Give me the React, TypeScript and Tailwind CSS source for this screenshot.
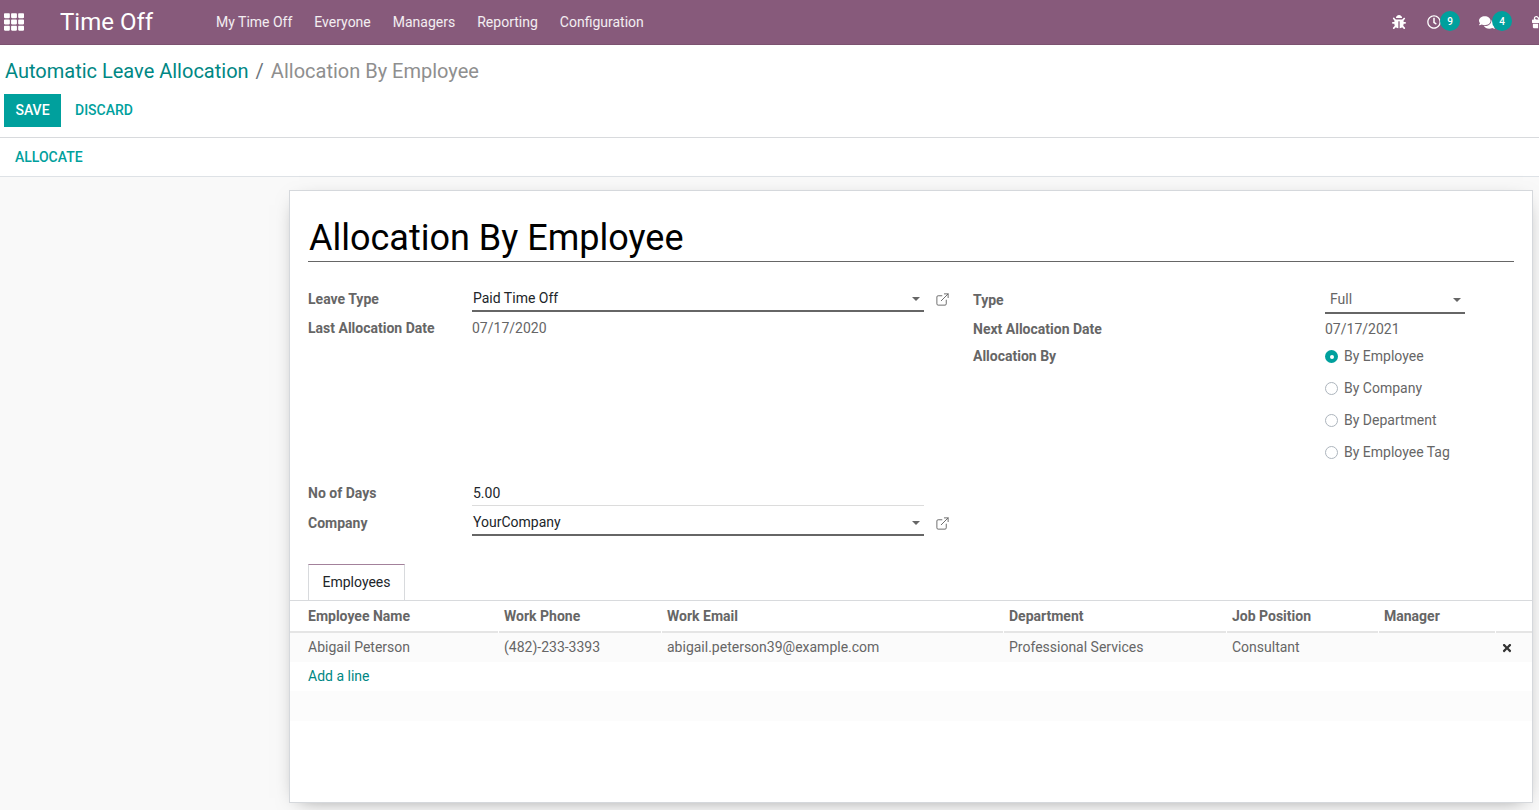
import { ChevronDown, ExternalLink } from "lucide-react";
import { FaBug, FaComments, FaGift, FaRegClock, FaTh, FaTimes } from "react-icons/fa";

const NAV_ITEMS = ["My Time Off", "Everyone", "Managers", "Reporting", "Configuration"];

const COLUMNS = [
  { label: "Employee Name", value: "Abigail Peterson", first: true },
  { label: "Work Phone", value: "(482)-233-3393" },
  { label: "Work Email", value: "abigail.peterson39@example.com" },
  { label: "Department", value: "Professional Services" },
  { label: "Job Position", value: "Consultant" },
  { label: "Manager", value: "" },
];

const RADIOS = ["By Employee", "By Company", "By Department", "By Employee Tag"];

function Caret() {
  return <span className="h-0 w-0 border-x-[4px] border-t-[4px] border-x-transparent border-t-[#666666]" />;
}

function Badge({ value }: { value: number }) {
  return (
    <span className="absolute left-[13px] top-[-4px] flex h-[20px] w-[20px] items-center justify-center rounded-full bg-[#00A09D] text-[10px] font-medium text-white">
      {value}
    </span>
  );
}

function Label({ text }: { text: string }) {
  return <span className="text-[14px] font-bold text-[#666666]">{text}</span>;
}

function SelectField({ value, width }: { value: string; width: string }) {
  return (
    <div className={`flex h-[25px] items-center justify-between border-b-2 border-[#666666] pl-px pr-1 ${width}`}>
      <span className="text-[14px] text-[#212529]">{value}</span>
      <Caret />
    </div>
  );
}

export default function App() {
  return (
    <div className="flex h-[810px] w-full flex-col overflow-hidden bg-[#f9f9f9] font-['Roboto',sans-serif] text-[14px] text-[#666666]">
      <header className="flex h-[45px] flex-none items-center border-b border-[#7c5270] bg-[#875A7B] text-white">
        <FaTh className="ml-[4px] h-[20px] w-[20px]" />
        <span className="ml-[36px] w-[156px] text-[24px]">Time Off</span>
        <nav className="flex gap-[22px]">
          {NAV_ITEMS.map((item) => (
            <span key={item} className="text-[14px] text-white/90">
              {item}
            </span>
          ))}
        </nav>
        <div className="ml-auto flex items-center">
          <FaBug className="h-[14px] w-[14px]" />
          <span className="relative ml-[21px] h-[14px] w-[14px]">
            <FaRegClock className="h-[14px] w-[14px]" />
            <Badge value={9} />
          </span>
          <span className="relative ml-[38px] h-[14px] w-[16px]">
            <FaComments className="h-[15px] w-[16px]" />
            <Badge value={4} />
          </span>
          <FaGift className="ml-[37px] mr-[-7px] h-[14px] w-[14px]" />
        </div>
      </header>

      <section className="flex-none border-b border-[#dee2e6] bg-white">
        <div className="flex h-[93px] flex-col border-b border-[#d8dadd] pl-[4px]">
          <div className="mt-[12px] flex h-[28px] items-center pl-px text-[20px]">
            <span className="text-[#008784]">Automatic Leave Allocation</span>
            <span className="mx-[7px] text-[#6c757d]">/</span>
            <span className="text-[#8f8f8f]">Allocation By Employee</span>
          </div>
          <div className="mt-[9px] flex items-center">
            <button className="h-[33px] w-[57px] bg-[#00A09D] text-[14px] font-medium text-white" type="button">
              SAVE
            </button>
            <button className="ml-[14px] text-[14px] font-medium text-[#00A09D]" type="button">
              DISCARD
            </button>
          </div>
        </div>
        <div className="flex h-[38px] items-center pl-[15px] text-[14px] font-medium text-[#00A09D]">ALLOCATE</div>
      </section>

      <main className="flex-1 pl-[289px] pr-[6px] pt-[13px]">
        <div className="h-[613px] border border-[#d5d8dc] bg-white shadow-[0_5px_20px_-10px_rgba(0,0,0,0.5)]">
          <div className="px-[18px]">
            <h1 className="mt-[24px] flex h-[46px] items-center border-b-0 pl-px text-[36px] font-normal leading-none text-black">
              Allocation By Employee
            </h1>
            <div className="h-[1px] w-[1206px] bg-[#666666]" />

            <div className="mt-[25px] flex">
              <div className="w-[665px]">
                <div className="flex items-center">
                  <div className="w-[164px]">
                    <Label text="Leave Type" />
                  </div>
                  <SelectField value="Paid Time Off" width="w-[452px]" />
                  <ExternalLink className="ml-[11px] h-[15px] w-[15px] stroke-[1.5] text-[#666666]" />
                </div>
                <div className="mt-[6px] flex items-center">
                  <div className="w-[164px]">
                    <Label text="Last Allocation Date" />
                  </div>
                  <span>07/17/2020</span>
                </div>
              </div>

              <div className="flex-1">
                <div className="flex items-center">
                  <div className="w-[352px]">
                    <Label text="Type" />
                  </div>
                  <div className="flex h-[27px] w-[140px] items-center justify-between border-b-2 border-[#666666] pl-[5px] pr-1">
                    <span>Full</span>
                    <Caret />
                  </div>
                </div>
                <div className="mt-[5px] flex items-center">
                  <div className="w-[352px]">
                    <Label text="Next Allocation Date" />
                  </div>
                  <span>07/17/2021</span>
                </div>
                <div className="mt-[6px] flex">
                  <div className="w-[352px]">
                    <Label text="Allocation By" />
                  </div>
                  <div className="flex flex-col gap-[11px]">
                    {RADIOS.map((radio, index) => (
                      <div key={radio} className="flex h-[21px] items-center">
                        {index === 0 ? (
                          <span className="flex h-[13px] w-[13px] items-center justify-center rounded-full bg-[#00A09D]">
                            <span className="h-[4px] w-[4px] rounded-full bg-white" />
                          </span>
                        ) : (
                          <span className="h-[13px] w-[13px] rounded-full border border-[#adb5bd]" />
                        )}
                        <span className="ml-[6px]">{radio}</span>
                      </div>
                    ))}
                  </div>
                </div>
              </div>
            </div>

            <div className="mt-[18px] flex items-center">
              <div className="w-[164px]">
                <Label text="No of Days" />
              </div>
              <div className="flex h-[25px] w-[452px] items-center border-b border-[#dcdcdc] pl-px text-[#212529]">5.00</div>
            </div>
            <div className="mt-[5px] flex items-center">
              <div className="w-[164px]">
                <Label text="Company" />
              </div>
              <SelectField value="YourCompany" width="w-[452px]" />
              <ExternalLink className="ml-[11px] h-[15px] w-[15px] stroke-[1.5] text-[#666666]" />
            </div>

            <div className="mt-[28px] flex h-[36px] w-[97px] items-center justify-center border-x border-t border-x-[#d8dadd] border-t-[#a3819b] bg-white text-[#212529]">
              Employees
            </div>
          </div>

          <div className="grid grid-cols-[209px_163px_342px_223px_152px_117px_36px] border-t border-[#d8dadd]">
            {COLUMNS.map((column) => (
              <div
                key={column.label}
                className={`mr-px flex h-[32px] items-center border-b-2 border-[#e5e5e5] font-bold ${column.first ? "pl-[18px]" : "pl-[5px]"}`}
              >
                {column.label}
              </div>
            ))}
            <div className="h-[32px] border-b-2 border-[#e5e5e5]" />
            {COLUMNS.map((column) => (
              <div
                key={column.label}
                className={`flex h-[29px] items-center bg-[#fbfbfb] ${column.first ? "pl-[18px]" : "pl-[5px]"}`}
              >
                {column.value}
              </div>
            ))}
            <div className="flex h-[29px] items-center bg-[#fbfbfb] pl-[5px]">
              <FaTimes className="h-[12px] w-[12px] text-[#333333]" />
            </div>
          </div>
          <div className="flex h-[29px] items-center pl-[18px] text-[#008784]">Add a line</div>
          <div className="h-[30px] bg-[#fcfcfc]" />
        </div>
      </main>
    </div>
  );
}
